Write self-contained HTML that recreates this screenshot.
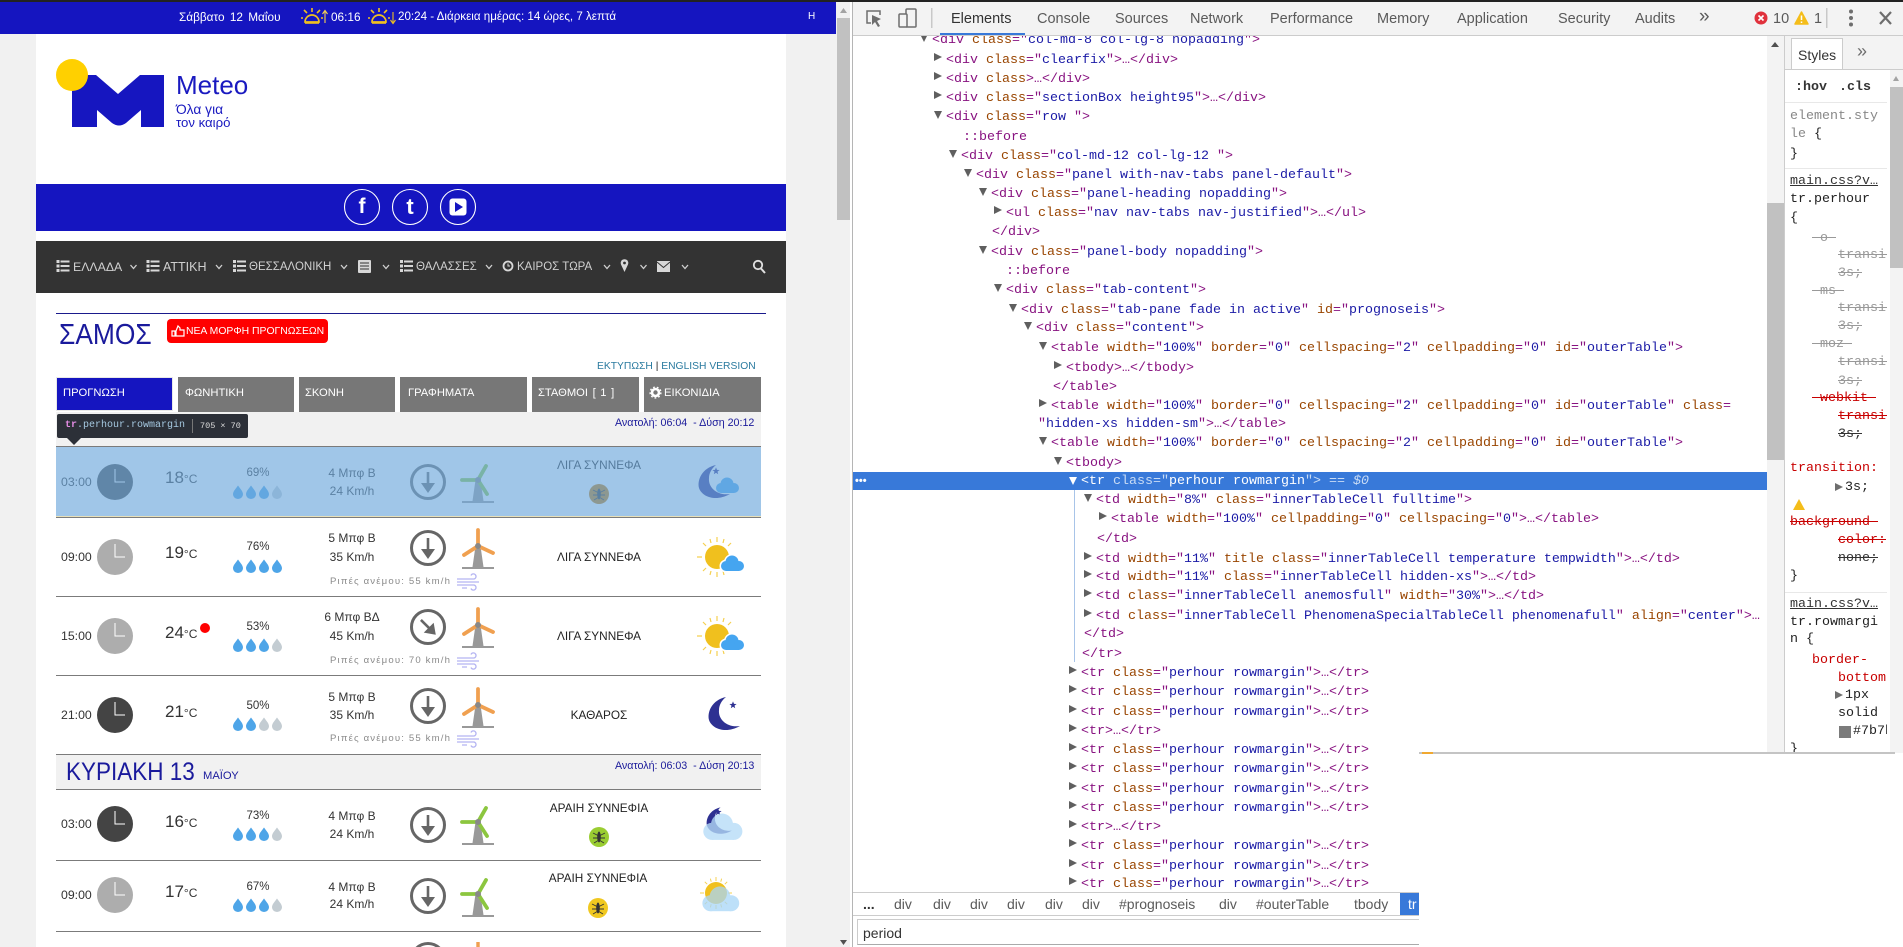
<!DOCTYPE html>
<html lang="el"><head><meta charset="utf-8"><title>Meteo</title>
<style>
html,body{margin:0;padding:0;width:1903px;height:947px;overflow:hidden;background:#fff}
body{position:relative;font-family:"Liberation Sans","DejaVu Sans",sans-serif;color:#333}
.a{position:absolute;white-space:nowrap}
.box{position:absolute}
svg{position:absolute;left:0;top:0}
.T{position:absolute;white-space:nowrap;line-height:16px}
.m{font-size:11.5px;color:#d0d0d0;line-height:16px;top:259px}
.tab{font-size:11.2px;color:#fff;top:385px}
.tm{font-size:12.3px;left:61px;color:#333}
.tp{left:165px;font-size:17px;color:#333;line-height:20px}.tp small{font-size:12px}
.c{width:160px;text-align:center}
.pc{left:178px;font-size:11.5px}
.w{left:272px;font-size:12px;line-height:16px}
.ph{left:519px;font-size:11.8px;color:#222}
.gu{left:330px;font-size:9.6px;letter-spacing:1.15px;color:#8a8a8a}
.sr{left:615px;font-size:10.7px;color:#1a1a9a}
.L{position:absolute;white-space:nowrap;font-family:"Liberation Mono",monospace;font-size:13.33px;line-height:18px;color:#881280;margin-top:1px}
.L i{color:#994500;font-style:normal}
.L b{color:#1a1aa6;font-weight:400}
.r::before,.d::before{content:"";position:absolute;width:0;height:0;border-style:solid;border-color:transparent;left:-12px}
.r::before{top:1px;border-width:4.5px 0 4.5px 8px;border-left-color:#5f5f5f}
.d::before{top:2px;border-width:8px 4px 0 4px;border-top-color:#5f5f5f}
.dt{font-size:14.5px;color:#5a5a5a;top:11px}
.S{position:absolute;white-space:nowrap;font-family:"Liberation Mono",monospace;font-size:13.33px;line-height:18px;color:#222}
.st{color:#999;text-decoration:line-through}
.rd{color:#c80000}
.rs{color:#c80000;text-decoration:line-through}
.bc{font-size:14px;color:#5a5a5a;top:896px}
</style></head><body>

<!-- LEFT PAGE BACKGROUNDS -->
<div class="box" style="left:0;top:0;width:850px;height:947px;background:#f1f1f1"></div>
<div class="box" style="left:36px;top:34px;width:750px;height:913px;background:#fff"></div>
<div class="box" style="left:0;top:2px;width:836px;height:32px;background:#1515c0"></div>
<div class="box" style="left:0;top:0;width:1903px;height:2px;background:#222"></div>
<div class="box" style="left:36px;top:184px;width:750px;height:47px;background:#1515c0"></div>
<div class="box" style="left:36px;top:241px;width:750px;height:52px;background:#333"></div>
<div class="box" style="left:56px;top:313px;width:710px;height:1px;background:#1a1a8c"></div>
<div class="box" style="left:167px;top:319px;width:161px;height:24px;background:#f00;border-radius:4px"></div>
<div class="box" style="left:56px;top:377px;width:117px;height:34px;background:#1515c0;border:1px solid #e8e8e8;box-sizing:border-box"></div>
<div class="box" style="left:178px;top:377px;width:116px;height:35px;background:#777"></div>
<div class="box" style="left:299px;top:377px;width:96px;height:35px;background:#777"></div>
<div class="box" style="left:400px;top:377px;width:127px;height:35px;background:#777"></div>
<div class="box" style="left:532px;top:377px;width:107px;height:35px;background:#777"></div>
<div class="box" style="left:644px;top:377px;width:117px;height:35px;background:#777"></div>
<div class="box" style="left:56px;top:412px;width:705px;height:34px;background:#f1f1f1"></div>
<div class="box" style="left:56px;top:754px;width:705px;height:35px;background:#f1f1f1"></div>
<div class="box" style="left:56px;top:446px;width:705px;height:1px;background:#7b7b7b"></div>
<div class="box" style="left:56px;top:517px;width:705px;height:1px;background:#7b7b7b"></div>
<div class="box" style="left:56px;top:596px;width:705px;height:1px;background:#7b7b7b"></div>
<div class="box" style="left:56px;top:675px;width:705px;height:1px;background:#7b7b7b"></div>
<div class="box" style="left:56px;top:754px;width:705px;height:1px;background:#7b7b7b"></div>
<div class="box" style="left:56px;top:789px;width:705px;height:1px;background:#7b7b7b"></div>
<div class="box" style="left:56px;top:860px;width:705px;height:1px;background:#7b7b7b"></div>
<div class="box" style="left:56px;top:931px;width:705px;height:1px;background:#7b7b7b"></div>
<!-- left scrollbar -->
<div class="box" style="left:837px;top:18px;width:13px;height:202px;background:#c1c1c1"></div>

<svg width="850" height="947" viewBox="0 0 850 947">
<defs>
<g id="clk"><circle r="18"/><path d="M0,-13V0H10" stroke="#fff" stroke-width="1" fill="none"/></g>
<g id="wd"><circle r="16.5" fill="none" stroke="#666" stroke-width="3"/><path d="M0,-10V4" stroke="#666" stroke-width="2.6"/><path d="M-7,1H7L0,11Z" fill="#666"/></g>
<g id="tower"><path d="M-2.5,0H2.5L5.500,21H-5.500Z" fill="#999"/><rect x="-16" y="21" width="32" height="2" fill="#999"/></g>
<g id="mo"><use href="#tower"/><g stroke="#f0a050" stroke-width="3.800" stroke-linecap="round"><path d="M0,0V-16"/><path d="M0,0L-14,9"/><path d="M0,0L15,7"/></g><circle r="3" fill="#888"/></g>
<g id="mg"><use href="#tower"/><g stroke="#8cc63f" stroke-width="3.800" stroke-linecap="round"><path d="M0,0L8,-14"/><path d="M0,0H-16"/><path d="M0,0L9,14"/></g><circle r="3" fill="#888"/></g>
<path id="dr" d="M0,-6.5C2.5,-3 5,-.5 5,2.2A5,4.8 0 0 1 -5,2.2C-5,-.5 -2.5,-3 0,-6.5Z"/>
<g id="d4"><use href="#dr" x="0" fill="#4ea5e8"/><use href="#dr" x="13" fill="#4ea5e8"/><use href="#dr" x="26" fill="#4ea5e8"/><use href="#dr" x="39" fill="#c3ccd2"/></g>
<g id="d5"><use href="#dr" x="0" fill="#4ea5e8"/><use href="#dr" x="13" fill="#4ea5e8"/><use href="#dr" x="26" fill="#4ea5e8"/><use href="#dr" x="39" fill="#4ea5e8"/></g>
<g id="d2"><use href="#dr" x="0" fill="#4ea5e8"/><use href="#dr" x="13" fill="#4ea5e8"/><use href="#dr" x="26" fill="#c3ccd2"/><use href="#dr" x="39" fill="#c3ccd2"/></g>
<g id="cl"><circle cx="-6" cy="2" r="5"/><circle cx="0" cy="-2" r="6.5"/><circle cx="7" cy="2" r="5"/><rect x="-6" y="1" width="13" height="6"/></g>
<g id="rays" stroke="#f5d050" stroke-width="1.2"><path d="M0,-15V-20M0,15V20M-15,0H-20M15,0H20M-11,-11L-14,-14M11,-11L14,-14M-11,11L-14,14M11,11L14,14M-6,-14L-7,-18M6,-14L7,-18M-6,14L-7,18M6,14L7,18"/></g>
<g id="sc"><use href="#rays"/><circle r="12" fill="#f0c01e"/><use href="#cl" x="15" y="7" fill="#fff" stroke="#fff" stroke-width="3"/><use href="#cl" x="15" y="7" fill="#45a5f0"/></g>
<path id="moon" d="M2,-17C-12,-14 -17,-2 -15,6C-12,15 2,20 16,12C4,14 -6,6 -5,-4C-5,-9 -2,-14 2,-17Z" fill="#2e3192"/>
<path id="star" d="M0,-3.6L1,-1.1L3.6,-1L1.5,.6L2.2,3.2L0,1.7L-2.2,3.2L-1.5,.6L-3.6,-1L-1,-1.1Z" fill="#2e3192"/>
<g id="mq"><circle r="10"/><g stroke="#333" stroke-width=".9" fill="none"><path d="M-6,-4L0,-1L6,-4M-6,1L0,1L6,1M-5,6L0,3L5,6"/></g><ellipse rx="1.8" ry="5.5" fill="#333"/></g>
<g id="gust" fill="none" stroke="#b5b5f2" stroke-width="1.3"><path d="M0,-3H17A2.600,2.600 0 1 0 14,-6.500M0,0H22M0,3H17A2.600,2.600 0 1 1 14,6.500M5,6H10"/></g>
<g id="li" fill="#d8d8d8"><rect x="0" y="0" width="3" height="3"/><rect x="0" y="4.5" width="3" height="3"/><rect x="0" y="9" width="3" height="3"/><rect x="4" y=".5" width="9" height="2"/><rect x="4" y="5" width="9" height="2"/><rect x="4" y="9.5" width="9" height="2"/></g>
<path id="ch" d="M-3,-2L0,1.5L3,-2" fill="none" stroke="#cfcfcf" stroke-width="1.3"/>
<g id="sun" fill="none"><path d="M-8,5A7,7 0 0 1 6,5Z" stroke="#f0c020" stroke-width="1.7"/><path d="M-1,-9V-5M-9,-7L-6,-4M7,-7L4,-4M-12,1H-10M8,1H10" stroke="#f0c020" stroke-width="1.6"/><path d="M-8,6H6" stroke="#f0c020" stroke-width="1.6"/></g>
</defs>

<!-- top bar icons -->
<use href="#sun" x="313" y="17"/><path d="M325,23V11M322.500,14L325,10.500L327.500,14" stroke="#f5d050" fill="none" stroke-width="1.100"/>
<use href="#sun" x="380" y="17"/><path d="M393,12V23M390.500,20L393,23.500L395.500,20" stroke="#f0c020" fill="none" stroke-width="1.100"/>

<!-- logo -->
<path d="M72,75H96L118,94L140,75H164V127H141V110L126,123Q119,128 112,123L97,110V127H72Z" fill="#1616c0"/>
<circle cx="72" cy="75" r="16" fill="#ffd000"/>

<!-- social -->
<g fill="none" stroke="#fff" stroke-width="1.100"><circle cx="362" cy="207" r="17.500"/><circle cx="410" cy="207" r="17.500"/><circle cx="458" cy="207" r="17.500"/></g>
<rect x="449.500" y="198.500" width="17" height="17" rx="3" fill="#fff"/><path d="M455,202L463,207L455,212Z" fill="#1515c0"/>

<!-- menu icons -->
<use href="#li" x="56.500" y="260"/><use href="#li" x="146.500" y="260"/><use href="#li" x="233" y="260"/><use href="#li" x="400" y="260"/>
<use href="#ch" x="133.500" y="267"/><use href="#ch" x="219" y="267"/><use href="#ch" x="344" y="267"/><use href="#ch" x="386" y="267"/><use href="#ch" x="489" y="267"/><use href="#ch" x="607" y="267"/><use href="#ch" x="643.500" y="267"/><use href="#ch" x="685" y="267"/>
<g fill="#d8d8d8"><rect x="358" y="260" width="13" height="13" rx="1"/></g><g stroke="#333" stroke-width="1"><path d="M360,263H369M360,266H369M360,269H369"/></g>
<circle cx="508" cy="266" r="4.500" fill="none" stroke="#d8d8d8" stroke-width="1.800"/><path d="M508,263.500V266H510" stroke="#d8d8d8" fill="none"/>
<path d="M624.500,272L621,264.500A3.800,3.800 0 1 1 628,264.500Z" fill="#d8d8d8"/><circle cx="624.500" cy="263" r="1.400" fill="#333"/>
<rect x="657" y="261" width="13" height="11" fill="#d8d8d8"/><path d="M657,262L663.500,267.500L670,262" fill="none" stroke="#333" stroke-width="1"/>
<circle cx="758" cy="265" r="4.200" fill="none" stroke="#e0e0e0" stroke-width="1.800"/><path d="M761,268.500L765,273" stroke="#e0e0e0" stroke-width="2"/>

<!-- red button hand -->
<path d="M172,331V336H175V331ZM176,331L178,326L180,328V330H184V336H176Z" fill="none" stroke="#fff" stroke-width="1.200"/>
<!-- gear -->
<circle cx="655.500" cy="392.500" r="3.500" fill="none" stroke="#fff" stroke-width="2.600"/><circle cx="655.500" cy="392.500" r="5.400" fill="none" stroke="#fff" stroke-width="1.400" stroke-dasharray="1.800 2"/>

<!-- ROW 1 -->
<use href="#clk" x="115" y="482" fill="#444"/>
<use href="#d4" x="238" y="492"/>
<use href="#wd" x="428" y="482"/><use href="#mg" x="478" y="480"/>
<use href="#mq" x="599" y="494" fill="#c87800"/>
<use href="#moon" x="714" y="482"/><use href="#star" x="716" y="471"/><use href="#cl" x="727" y="486" fill="#45a5f0"/>

<!-- ROW 2 -->
<use href="#clk" x="115" y="557" fill="#adadad"/>
<use href="#d5" x="238" y="566"/>
<use href="#wd" x="428" y="548"/><use href="#mo" x="478" y="546"/>
<use href="#gust" x="457" y="582"/>
<use href="#sc" x="717" y="557"/>

<!-- ROW 3 -->
<use href="#clk" x="115" y="636" fill="#adadad"/>
<circle cx="205" cy="628" r="5" fill="#f00"/>
<use href="#d4" x="238" y="645"/>
<use href="#wd" x="428" y="627" transform="rotate(-45 428 627)"/><use href="#mo" x="478" y="625"/>
<use href="#gust" x="457" y="661"/>
<use href="#sc" x="717" y="636"/>

<!-- ROW 4 -->
<use href="#clk" x="115" y="715" fill="#444"/>
<use href="#d2" x="238" y="724"/>
<use href="#wd" x="428" y="706"/><use href="#mo" x="478" y="705"/>
<use href="#gust" x="457" y="739"/>
<use href="#moon" x="724" y="714"/><use href="#star" x="733" y="705"/>

<!-- ROW 5 -->
<use href="#clk" x="115" y="824" fill="#444"/>
<use href="#d4" x="238" y="834"/>
<use href="#wd" x="428" y="825"/><use href="#mg" x="478" y="822"/>
<use href="#mq" x="599" y="837" fill="#9acd32"/>
<use href="#moon" x="719" y="821" transform="translate(719 821) scale(.8) translate(-719 -821)"/><use href="#star" x="718" y="812"/>
<g opacity=".78"><use href="#cl" transform="translate(722 828) scale(1.700)" fill="#b5dcf8"/></g>

<!-- ROW 6 -->
<use href="#clk" x="115" y="895" fill="#adadad"/>
<use href="#d4" x="238" y="905"/>
<use href="#wd" x="428" y="896"/><use href="#mg" x="478" y="894"/>
<use href="#mq" x="598" y="908" fill="#f0c820"/>
<use href="#rays" transform="translate(716 893) scale(.8)"/><circle cx="716" cy="893" r="11" fill="#f0c01e"/>
<g opacity=".75"><use href="#cl" transform="translate(720 900) scale(1.600)" fill="#a8d6f8"/></g>

<!-- ROW 7 peek -->
<circle cx="428" cy="960" r="16.500" fill="none" stroke="#666" stroke-width="3"/>
<path d="M478,942V958" stroke="#f0a050" stroke-width="3.400"/>

<!-- left scrollbar arrows -->
<path d="M843.500,8L847,13H840Z" fill="#a3a3a3"/><path d="M840,940H847L843.500,945Z" fill="#505050"/>
</svg>

<!-- TOP BAR TEXT -->
<div class="T" style="left:179px;top:9px;font-size:11.8px;color:#fff;word-spacing:2px">Σάββατο 12 Μαΐου</div>
<div class="T" style="left:331px;top:9px;font-size:11.8px;color:#fff">06:16</div>
<div class="T" style="left:398px;top:9px;font-size:11.600px;color:#fff">20:24 - Διάρκεια ημέρας: 14 ώρες, 7 λεπτά</div>
<div class="T" style="left:808px;top:9px;font-size:10px;color:#fff">Η</div>

<!-- LOGO TEXT -->
<div class="T" style="left:176px;top:71px;font-size:26px;line-height:28px;color:#1a1ac0">Meteo</div>
<div class="T" style="left:176px;top:102px;font-size:13.800px;color:#1a1ac0">Όλα για</div>
<div class="T" style="left:176px;top:115px;font-size:13.200px;color:#1a1ac0">τον καιρό</div>

<!-- SOCIAL TEXT -->
<div class="T" style="left:352px;top:196px;width:20px;text-align:center;font-size:21px;line-height:22px;font-weight:700;color:#fff">f</div>
<div class="T" style="left:400px;top:196px;width:20px;text-align:center;font-size:22px;line-height:22px;font-weight:700;color:#fff">t</div>

<!-- MENU TEXT -->
<div class="T m" style="left:73px;font-size:12.300px">ΕΛΛΑΔΑ</div>
<div class="T m" style="left:163px;font-size:12.500px">ΑΤΤΙΚΗ</div>
<div class="T m" style="left:249px">ΘΕΣΣΑΛΟΝΙΚΗ</div>
<div class="T m" style="left:416px">ΘΑΛΑΣΣΕΣ</div>
<div class="T m" style="left:517px">ΚΑΙΡΟΣ ΤΩΡΑ</div>

<!-- TITLE -->
<div class="T" style="left:59px;top:318px;font-size:29px;line-height:34px;color:#1a1a9c;transform:scaleX(.91);transform-origin:0 0">ΣΑΜΟΣ</div>
<div class="T" style="left:186px;top:324px;font-size:10.400px;color:#fff">ΝΕΑ ΜΟΡΦΗ ΠΡΟΓΝΩΣΕΩΝ</div>
<div class="T" style="left:597px;top:359px;font-size:10.300px;color:#2a7a9f">ΕΚΤΥΠΩΣΗ <span style="color:#222">|</span> ENGLISH VERSION</div>

<!-- TABS -->
<div class="T tab" style="left:63px">ΠΡΟΓΝΩΣΗ</div>
<div class="T tab" style="left:185px">ΦΩΝΗΤΙΚΗ</div>
<div class="T tab" style="left:305px">ΣΚΟΝΗ</div>
<div class="T tab" style="left:408px">ΓΡΑΦΗΜΑΤΑ</div>
<div class="T tab" style="left:538px;word-spacing:1.500px">ΣΤΑΘΜΟΙ [ 1 ]</div>
<div class="T tab" style="left:664px">ΕΙΚΟΝΙΔΙΑ</div>

<div class="T sr" style="top:415px">Ανατολή: 06:04 &nbsp;- Δύση 20:12</div>

<!-- ROW 1 TEXT -->
<div class="T tm" style="top:474px">03:00</div>
<div class="T tp" style="top:468px">18<small>°C</small></div>
<div class="T c pc" style="top:465px">69%</div>
<div class="T c w" style="top:465px">4 Μπφ Β</div>
<div class="T c w" style="top:483px">24 Km/h</div>
<div class="T c ph" style="top:457px">ΛΙΓΑ ΣΥΝΝΕΦΑ</div>

<!-- ROW 2 TEXT -->
<div class="T tm" style="top:549px">09:00</div>
<div class="T tp" style="top:543px">19<small>°C</small></div>
<div class="T c pc" style="top:539px">76%</div>
<div class="T c w" style="top:530px">5 Μπφ Β</div>
<div class="T c w" style="top:549px">35 Km/h</div>
<div class="T c ph" style="top:549px">ΛΙΓΑ ΣΥΝΝΕΦΑ</div>
<div class="T gu" style="top:574px">Ριπές ανέμου: 55 km/h</div>

<!-- ROW 3 TEXT -->
<div class="T tm" style="top:628px">15:00</div>
<div class="T tp" style="top:623px">24<small>°C</small></div>
<div class="T c pc" style="top:619px">53%</div>
<div class="T c w" style="top:609px">6 Μπφ ΒΔ</div>
<div class="T c w" style="top:628px">45 Km/h</div>
<div class="T c ph" style="top:628px">ΛΙΓΑ ΣΥΝΝΕΦΑ</div>
<div class="T gu" style="top:653px">Ριπές ανέμου: 70 km/h</div>

<!-- ROW 4 TEXT -->
<div class="T tm" style="top:707px">21:00</div>
<div class="T tp" style="top:702px">21<small>°C</small></div>
<div class="T c pc" style="top:698px">50%</div>
<div class="T c w" style="top:689px">5 Μπφ Β</div>
<div class="T c w" style="top:707px">35 Km/h</div>
<div class="T c ph" style="top:707px">ΚΑΘΑΡΟΣ</div>
<div class="T gu" style="top:731px">Ριπές ανέμου: 55 km/h</div>

<!-- DAY 2 -->
<div class="T" style="left:66px;top:756px;font-size:25px;line-height:32px;color:#1a1a9c;transform:scaleX(.9);transform-origin:0 0">ΚΥΡΙΑΚΗ 13</div>
<div class="T" style="left:203px;top:768px;font-size:11.200px;color:#1a1a9c">ΜΑΪΟΥ</div>
<div class="T sr" style="top:758px">Ανατολή: 06:03 &nbsp;- Δύση 20:13</div>

<!-- ROW 5 TEXT -->
<div class="T tm" style="top:816px">03:00</div>
<div class="T tp" style="top:812px">16<small>°C</small></div>
<div class="T c pc" style="top:808px">73%</div>
<div class="T c w" style="top:808px">4 Μπφ Β</div>
<div class="T c w" style="top:826px">24 Km/h</div>
<div class="T c ph" style="top:800px">ΑΡΑΙΗ ΣΥΝΝΕΦΙΑ</div>

<!-- ROW 6 TEXT -->
<div class="T tm" style="top:887px">09:00</div>
<div class="T tp" style="top:882px">17<small>°C</small></div>
<div class="T c pc" style="top:879px">67%</div>
<div class="T c w" style="top:879px">4 Μπφ Β</div>
<div class="T c w" style="top:896px">24 Km/h</div>
<div class="T c ph" style="top:870px;left:518px">ΑΡΑΙΗ ΣΥΝΝΕΦΙΑ</div>

<!-- HIGHLIGHT OVERLAY -->
<div class="box" style="left:56px;top:447px;width:705px;height:70px;background:rgba(111,168,220,.66)"></div>
<div class="box" style="left:56px;top:516px;width:705px;height:1px;background:#e8e0b8"></div>

<!-- TOOLTIP -->
<div class="box" style="left:57px;top:414px;width:191px;height:24px;background:#2c3038;border-radius:2px"></div>
<div class="box" style="left:67px;top:438px;width:0;height:0;border-style:solid;border-width:7px 7px 0 7px;border-color:#2c3038 transparent transparent transparent"></div>
<div class="box" style="left:192px;top:419px;width:1px;height:14px;background:#777"></div>
<div class="T" style="left:65px;top:418px;font-family:'Liberation Mono',monospace;font-size:10px;color:#a5c8e0"><span style="color:#e08ae0;font-weight:700">tr</span>.perhour.rowmargin</div>
<div class="T" style="left:200px;top:418px;font-family:'Liberation Mono',monospace;font-size:8.500px;color:#ddd">705 × 70</div>

<!-- DEVTOOLS -->
<div class="box" style="left:850px;top:2px;width:1053px;height:945px;background:#fff"></div>
<div class="box" style="left:852px;top:2px;width:1px;height:945px;background:#b5b5b5"></div>

<!-- ELEMENTS TREE -->
<div class="L d" style="left:932px;top:31px">&lt;div <i>class</i>="<b>col-md-8 col-lg-8 nopadding</b>"&gt;</div>
<div class="L r" style="left:946px;top:51px">&lt;div <i>class</i>="<b>clearfix</b>"&gt;…&lt;/div&gt;</div>
<div class="L r" style="left:946px;top:70px">&lt;div <i>class</i>&gt;…&lt;/div&gt;</div>
<div class="L r" style="left:946px;top:89px">&lt;div <i>class</i>="<b>sectionBox height95</b>"&gt;…&lt;/div&gt;</div>
<div class="L d" style="left:946px;top:108px">&lt;div <i>class</i>="<b>row </b>"&gt;</div>
<div class="L" style="left:963px;top:128px">::before</div>
<div class="L d" style="left:961px;top:147px">&lt;div <i>class</i>="<b>col-md-12 col-lg-12 </b>"&gt;</div>
<div class="L d" style="left:976px;top:166px">&lt;div <i>class</i>="<b>panel with-nav-tabs panel-default</b>"&gt;</div>
<div class="L d" style="left:991px;top:185px">&lt;div <i>class</i>="<b>panel-heading nopadding</b>"&gt;</div>
<div class="L r" style="left:1006px;top:204px">&lt;ul <i>class</i>="<b>nav nav-tabs nav-justified</b>"&gt;…&lt;/ul&gt;</div>
<div class="L" style="left:992px;top:223px">&lt;/div&gt;</div>
<div class="L d" style="left:991px;top:243px">&lt;div <i>class</i>="<b>panel-body nopadding</b>"&gt;</div>
<div class="L" style="left:1006px;top:262px">::before</div>
<div class="L d" style="left:1006px;top:281px">&lt;div <i>class</i>="<b>tab-content</b>"&gt;</div>
<div class="L d" style="left:1021px;top:301px">&lt;div <i>class</i>="<b>tab-pane fade in active</b>" <i>id</i>="<b>prognoseis</b>"&gt;</div>
<div class="L d" style="left:1036px;top:319px">&lt;div <i>class</i>="<b>content</b>"&gt;</div>
<div class="L d" style="left:1051px;top:339px">&lt;table <i>width</i>="<b>100%</b>" <i>border</i>="<b>0</b>" <i>cellspacing</i>="<b>2</b>" <i>cellpadding</i>="<b>0</b>" <i>id</i>="<b>outerTable</b>"&gt;</div>
<div class="L r" style="left:1066px;top:359px">&lt;tbody&gt;…&lt;/tbody&gt;</div>
<div class="L" style="left:1053px;top:378px">&lt;/table&gt;</div>
<div class="L r" style="left:1051px;top:397px">&lt;table <i>width</i>="<b>100%</b>" <i>border</i>="<b>0</b>" <i>cellspacing</i>="<b>2</b>" <i>cellpadding</i>="<b>0</b>" <i>id</i>="<b>outerTable</b>" <i>class</i>=</div>
<div class="L" style="left:1038px;top:415px">"<b>hidden-xs hidden-sm</b>"&gt;…&lt;/table&gt;</div>
<div class="L d" style="left:1051px;top:434px">&lt;table <i>width</i>="<b>100%</b>" <i>border</i>="<b>0</b>" <i>cellspacing</i>="<b>2</b>" <i>cellpadding</i>="<b>0</b>" <i>id</i>="<b>outerTable</b>"&gt;</div>
<div class="L d" style="left:1066px;top:454px">&lt;tbody&gt;</div>

<div class="box" style="left:853px;top:472px;width:914px;height:18px;background:#3879d9"></div>
<div class="T" style="left:855px;top:473px;font-size:11px;font-weight:700;color:#fff;letter-spacing:0">•••</div>
<div class="box" style="left:1069px;top:477px;width:0;height:0;border-style:solid;border-width:8px 4px 0 4px;border-color:#fff transparent transparent transparent"></div>
<div class="L" style="left:1081px;top:472px;color:#fff">&lt;tr <span style="color:#c9dcf5">class="</span>perhour rowmargin<span style="color:#c9dcf5">"&gt; == <em>$0</em></span></div>

<div class="box" style="left:1074px;top:490px;width:1px;height:172px;background:#a8c4e8"></div>
<div class="L d" style="left:1096px;top:491px">&lt;td <i>width</i>="<b>8%</b>" <i>class</i>="<b>innerTableCell fulltime</b>"&gt;</div>
<div class="L r" style="left:1111px;top:510px">&lt;table <i>width</i>="<b>100%</b>" <i>cellpadding</i>="<b>0</b>" <i>cellspacing</i>="<b>0</b>"&gt;…&lt;/table&gt;</div>
<div class="L" style="left:1097px;top:530px">&lt;/td&gt;</div>
<div class="L r" style="left:1096px;top:550px">&lt;td <i>width</i>="<b>11%</b>" <i>title class</i>="<b>innerTableCell temperature tempwidth</b>"&gt;…&lt;/td&gt;</div>
<div class="L r" style="left:1096px;top:568px">&lt;td <i>width</i>="<b>11%</b>" <i>class</i>="<b>innerTableCell hidden-xs</b>"&gt;…&lt;/td&gt;</div>
<div class="L r" style="left:1096px;top:587px">&lt;td <i>class</i>="<b>innerTableCell anemosfull</b>" <i>width</i>="<b>30%</b>"&gt;…&lt;/td&gt;</div>
<div class="L r" style="left:1096px;top:607px">&lt;td <i>class</i>="<b>innerTableCell PhenomenaSpecialTableCell phenomenafull</b>" <i>align</i>="<b>center</b>"&gt;…</div>
<div class="L" style="left:1084px;top:625px">&lt;/td&gt;</div>
<div class="L" style="left:1082px;top:645px">&lt;/tr&gt;</div>
<div class="L r" style="left:1081px;top:664px">&lt;tr <i>class</i>="<b>perhour rowmargin</b>"&gt;…&lt;/tr&gt;</div>
<div class="L r" style="left:1081px;top:683px">&lt;tr <i>class</i>="<b>perhour rowmargin</b>"&gt;…&lt;/tr&gt;</div>
<div class="L r" style="left:1081px;top:703px">&lt;tr <i>class</i>="<b>perhour rowmargin</b>"&gt;…&lt;/tr&gt;</div>
<div class="L r" style="left:1081px;top:722px">&lt;tr&gt;…&lt;/tr&gt;</div>
<div class="L r" style="left:1081px;top:741px">&lt;tr <i>class</i>="<b>perhour rowmargin</b>"&gt;…&lt;/tr&gt;</div>
<div class="L r" style="left:1081px;top:760px">&lt;tr <i>class</i>="<b>perhour rowmargin</b>"&gt;…&lt;/tr&gt;</div>
<div class="L r" style="left:1081px;top:780px">&lt;tr <i>class</i>="<b>perhour rowmargin</b>"&gt;…&lt;/tr&gt;</div>
<div class="L r" style="left:1081px;top:799px">&lt;tr <i>class</i>="<b>perhour rowmargin</b>"&gt;…&lt;/tr&gt;</div>
<div class="L r" style="left:1081px;top:818px">&lt;tr&gt;…&lt;/tr&gt;</div>
<div class="L r" style="left:1081px;top:837px">&lt;tr <i>class</i>="<b>perhour rowmargin</b>"&gt;…&lt;/tr&gt;</div>
<div class="L r" style="left:1081px;top:857px">&lt;tr <i>class</i>="<b>perhour rowmargin</b>"&gt;…&lt;/tr&gt;</div>
<div class="L r" style="left:1081px;top:875px">&lt;tr <i>class</i>="<b>perhour rowmargin</b>"&gt;…&lt;/tr&gt;</div>

<!-- TOOLBAR -->
<div class="box" style="left:853px;top:2px;width:1050px;height:33px;background:#f3f3f3;border-bottom:1px solid #ccc"></div>
<div class="box" style="left:940px;top:33px;width:85px;height:2px;background:#3879d9"></div>
<svg style="left:850px;top:0" width="90" height="36" viewBox="0 0 90 36">
<path d="M21,23H17V11H30V15" fill="none" stroke="#6e6e6e" stroke-width="1.500"/><path d="M22,15L31,19L27,21L30,26L28,27L25,22L22,25Z" fill="#6e6e6e"/>
<rect x="56" y="9" width="10" height="18" rx="1" fill="none" stroke="#6e6e6e" stroke-width="1.500"/><rect x="49" y="14" width="8" height="13" rx="1" fill="#f3f3f3" stroke="#6e6e6e" stroke-width="1.500"/>
<rect x="81" y="8" width="1.500" height="20" fill="#c8c8c8"/>
</svg>
<div class="T dt" style="left:951px;color:#333">Elements</div>
<div class="T dt" style="left:1037px">Console</div>
<div class="T dt" style="left:1115px">Sources</div>
<div class="T dt" style="left:1190px">Network</div>
<div class="T dt" style="left:1270px">Performance</div>
<div class="T dt" style="left:1377px">Memory</div>
<div class="T dt" style="left:1457px">Application</div>
<div class="T dt" style="left:1558px">Security</div>
<div class="T dt" style="left:1635px">Audits</div>
<div class="T" style="left:1699px;top:9px;font-size:19px;color:#5a5a5a">»</div>
<div class="T dt" style="left:1773px">10</div>
<div class="T dt" style="left:1814px">1</div>
<svg style="left:1740px;top:0" width="163" height="36" viewBox="0 0 163 36">
<circle cx="21" cy="18" r="6.500" fill="#e0313c"/><path d="M18.500,15.500L23.500,20.500M23.500,15.500L18.500,20.500" stroke="#fff" stroke-width="1.600"/>
<path d="M61.500,12L68,24H55Z" fill="#f4bd1a" stroke="#f4bd1a" stroke-width="1.500" stroke-linejoin="round"/><path d="M61.500,15.500V20M61.500,21.500V23" stroke="#fff" stroke-width="1.500"/>
<rect x="86" y="8" width="1.500" height="20" fill="#c8c8c8"/>
<circle cx="111" cy="11.500" r="2" fill="#6e6e6e"/><circle cx="111" cy="18" r="2" fill="#6e6e6e"/><circle cx="111" cy="24.500" r="2" fill="#6e6e6e"/>
<path d="M140,12L151,24M151,12L140,24" stroke="#6e6e6e" stroke-width="2.200"/>
</svg>

<!-- ELEMENTS SCROLLBAR -->
<div class="box" style="left:1767px;top:36px;width:17px;height:717px;background:#f3f3f3"></div>
<div class="box" style="left:1767px;top:203px;width:17px;height:257px;background:#c1c1c1"></div>
<div class="box" style="left:1771px;top:42px;width:0;height:0;border-style:solid;border-width:0 4px 5px 4px;border-color:transparent transparent #505050 transparent"></div>

<!-- STYLES SIDEBAR -->
<div class="box" style="left:1784px;top:36px;width:1px;height:717px;background:#ccc"></div>
<div class="box" style="left:1785px;top:36px;width:118px;height:33px;background:#f3f3f3;border-bottom:1px solid #ccc"></div>
<div class="box" style="left:1791px;top:38px;width:52px;height:31px;background:#fff;border:1px solid #ccc;border-bottom:0;box-sizing:border-box"></div>
<div class="T" style="left:1798px;top:47px;font-size:14px;color:#333">Styles</div>
<div class="T" style="left:1857px;top:43px;font-size:18px;color:#6e6e6e">»</div>

<div class="box" style="left:1785px;top:70px;width:118px;height:683px;background:#fff"></div>
<div class="box" style="left:1785px;top:70px;width:102px;height:683px;overflow:hidden;background:#fff">
 <div class="S" style="left:10px;top:9px;font-weight:700;color:#333">:hov</div>
 <div class="S" style="left:54px;top:9px;font-weight:700;color:#333">.cls</div>
 <div class="box" style="left:0;top:32px;width:105px;height:1px;background:#e8e8e8"></div>
 <div class="S" style="left:5px;top:38px;color:#888">element.sty</div>
 <div class="S" style="left:5px;top:56px;color:#888">le <span style="color:#222">{</span></div>
 <div class="S" style="left:5px;top:76px">}</div>
 <div class="box" style="left:0;top:98px;width:105px;height:1px;background:#e8e8e8"></div>
 <div class="S" style="left:5px;top:103px;text-decoration:underline;color:#333">main.css?v…</div>
 <div class="S" style="left:5px;top:121px">tr.perhour</div>
 <div class="S" style="left:5px;top:140px">{</div>
 <div class="S st" style="left:27px;top:160px">-o-</div>
 <div class="S st" style="left:53px;top:177px">transition</div>
 <div class="S st" style="left:53px;top:195px">3s;</div>
 <div class="S st" style="left:27px;top:213px">-ms-</div>
 <div class="S st" style="left:53px;top:230px">transition</div>
 <div class="S st" style="left:53px;top:248px">3s;</div>
 <div class="S st" style="left:27px;top:266px">-moz-</div>
 <div class="S st" style="left:53px;top:284px">transition</div>
 <div class="S st" style="left:53px;top:303px">3s;</div>
 <div class="S rs" style="left:27px;top:320px">-webkit-</div>
 <div class="S rs" style="left:53px;top:338px">transition</div>
 <div class="S" style="left:53px;top:356px;text-decoration:line-through;color:#333">3s;</div>
 <div class="S rd" style="left:5px;top:390px">transition:</div>
 <div class="box" style="left:50px;top:413px;width:0;height:0;border-style:solid;border-width:4.500px 0 4.500px 8px;border-color:transparent transparent transparent #6e6e6e"></div>
 <div class="S" style="left:60px;top:409px">3s;</div>
 <div class="box" style="left:8px;top:429px;width:0;height:0;border-style:solid;border-width:0 6px 11px 6px;border-color:transparent transparent #f4bd1a transparent"></div>
 <div class="S rs" style="left:5px;top:444px">background-</div>
 <div class="S rs" style="left:53px;top:462px">color:</div>
 <div class="S" style="left:53px;top:480px;text-decoration:line-through;color:#333">none;</div>
 <div class="S" style="left:5px;top:498px">}</div>
 <div class="box" style="left:0;top:522px;width:105px;height:1px;background:#e8e8e8"></div>
 <div class="S" style="left:5px;top:526px;text-decoration:underline;color:#333">main.css?v…</div>
 <div class="S" style="left:5px;top:544px">tr.rowmargi</div>
 <div class="S" style="left:5px;top:561px">n {</div>
 <div class="S rd" style="left:27px;top:582px">border-</div>
 <div class="S rd" style="left:53px;top:600px">bottom</div>
 <div class="box" style="left:50px;top:621px;width:0;height:0;border-style:solid;border-width:4.500px 0 4.500px 8px;border-color:transparent transparent transparent #6e6e6e"></div>
 <div class="S" style="left:60px;top:617px">1px</div>
 <div class="S" style="left:53px;top:635px">solid</div>
 <div class="box" style="left:54px;top:656px;width:12px;height:12px;background:#7b7b7b"></div>
 <div class="S" style="left:68px;top:653px">#7b7b7b</div>
 <div class="S" style="left:5px;top:671px">}</div>
</div>
<div class="box" style="left:1890px;top:70px;width:13px;height:683px;background:#f3f3f3"></div>
<div class="box" style="left:1890px;top:87px;width:13px;height:181px;background:#c1c1c1"></div>
<div class="box" style="left:1893px;top:76px;width:0;height:0;border-style:solid;border-width:0 3.500px 5px 3.500px;border-color:transparent transparent #a3a3a3 transparent"></div>

<!-- BREADCRUMB + SEARCH -->
<div class="box" style="left:853px;top:892px;width:566px;height:55px;background:#fff"></div>
<div class="box" style="left:853px;top:892px;width:566px;height:1px;background:#ccc"></div>
<div class="box" style="left:853px;top:915px;width:566px;height:1px;background:#ccc"></div>
<div class="T bc" style="left:863px;font-weight:700;color:#333">...</div>
<div class="T bc" style="left:894px">div</div>
<div class="T bc" style="left:933px">div</div>
<div class="T bc" style="left:970px">div</div>
<div class="T bc" style="left:1007px">div</div>
<div class="T bc" style="left:1045px">div</div>
<div class="T bc" style="left:1082px">div</div>
<div class="T bc" style="left:1119px">#prognoseis</div>
<div class="T bc" style="left:1219px">div</div>
<div class="T bc" style="left:1256px">#outerTable</div>
<div class="T bc" style="left:1354px">tbody</div>
<div class="box" style="left:1400px;top:893px;width:19px;height:22px;background:#3879d9;overflow:hidden"><div class="T" style="left:8px;top:3px;font-size:14px;color:#fff">tr</div></div>
<div class="box" style="left:857px;top:919px;width:562px;height:26px;background:#fff;border-top:1px solid #ccc;border-left:1px solid #ccc;border-bottom:1px solid #aaa;box-sizing:border-box"></div>
<div class="T" style="left:863px;top:925px;font-size:14px;color:#333">period</div>

<!-- WHITE PANEL -->
<div class="box" style="left:1419px;top:753px;width:484px;height:194px;background:#fff"></div>
<div class="box" style="left:1419px;top:752px;width:476px;height:2px;background:#c4c4c4"></div>
<div class="box" style="left:1422px;top:752px;width:11px;height:2px;background:#f0a830"></div>

</body></html>
